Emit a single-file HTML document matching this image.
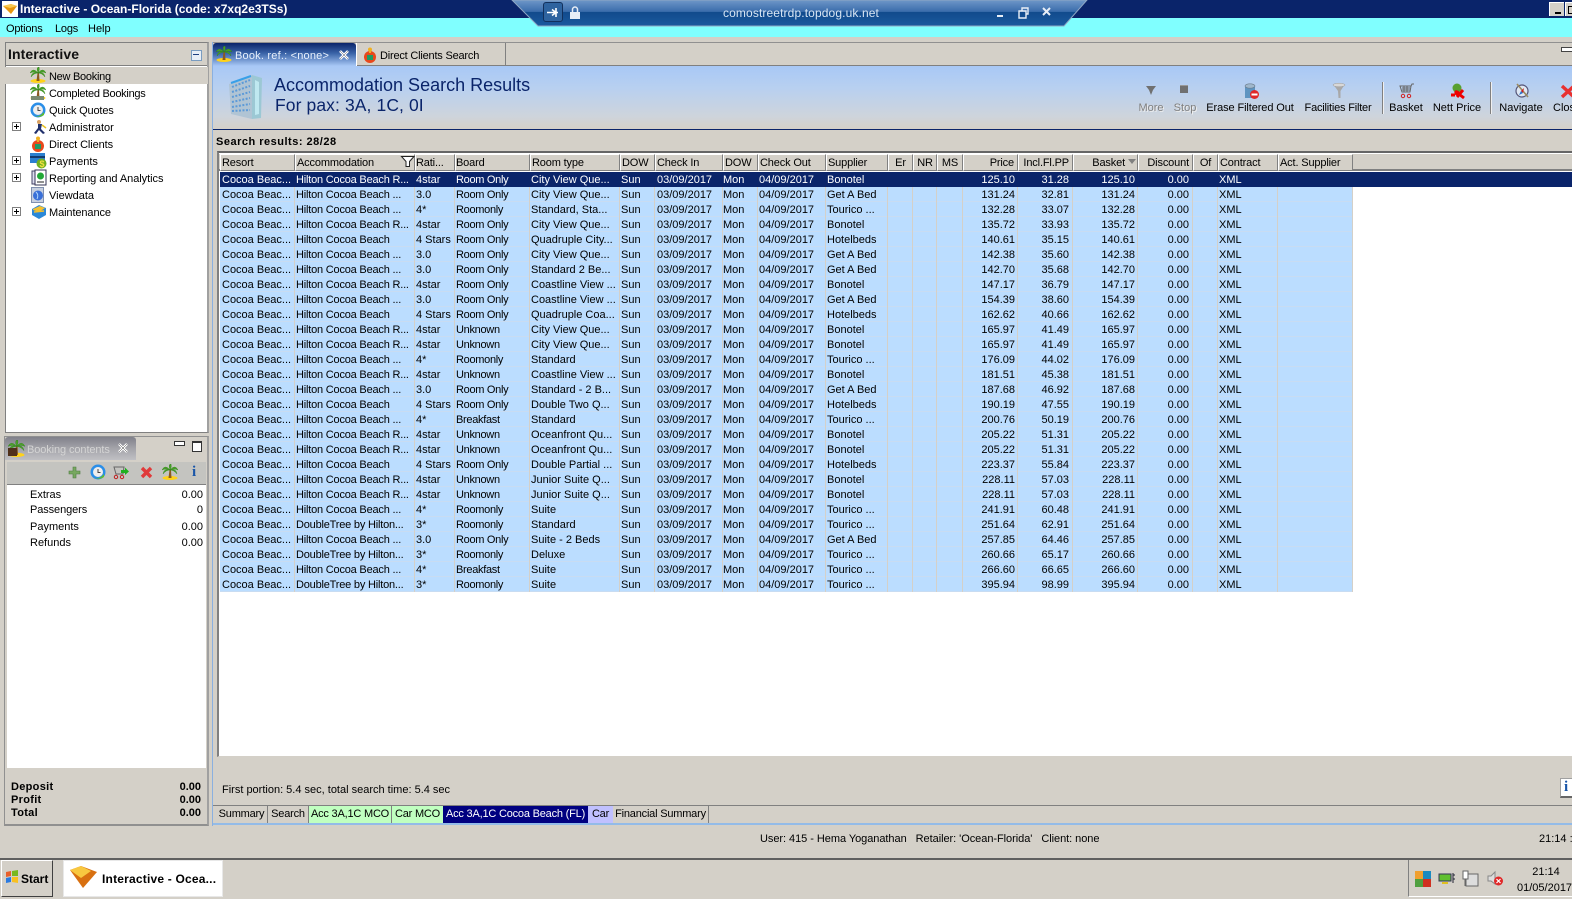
<!DOCTYPE html>
<html><head><meta charset="utf-8"><style>
html,body{margin:0;padding:0}
body{width:1572px;height:899px;overflow:hidden;background:#d4d0c8;position:relative;font:11px "Liberation Sans",sans-serif;color:#000}
.a{position:absolute;white-space:nowrap}
svg{position:absolute;overflow:visible}
table{border-collapse:separate;border-spacing:0;table-layout:fixed;position:absolute;font:11px/14px "Liberation Sans",sans-serif}
#g{left:220px;top:172px;width:1133px;background:#bbddff}
#g td{height:15px;line-height:14px;padding:1px 0 0 1px;border-right:1px solid #d4d0c8;box-shadow:inset 0 -1px 0 #c8dcf2;overflow:hidden;white-space:nowrap;box-sizing:border-box;vertical-align:top}
#g td:first-child{padding-left:2px}
#g td:nth-child(2),#g td:nth-child(10){padding-left:1px}
#g td:nth-child(7){padding-left:2px}
#g td:nth-child(8){padding-left:0}
#g td:nth-child(2){letter-spacing:-.2px}
#g td:nth-child(4){letter-spacing:-.3px}
#g td:nth-child(n+14):nth-child(-n+17){text-align:right}
#g td:nth-child(14){padding-right:2px}
#g td:nth-child(15){padding-right:3px}
#g td:nth-child(16){padding-right:2px}
#g td:nth-child(17){padding-right:3px}
#g tr:first-child td{background:#0a246a;color:#fff;border-color:#0a246a;box-shadow:none}
#h{left:220px;top:154px;width:1133px;letter-spacing:-.15px}
#h td{height:17px;padding:1px 0 0 1px;background:#d4d0c8;border-top:1px solid #fff;border-left:1px solid #fff;border-right:1px solid #808080;border-bottom:1px solid #808080;box-sizing:border-box;white-space:nowrap;overflow:hidden}
#h td:nth-child(3),#h td:nth-child(4){padding-left:0}
.r{text-align:right;padding-right:3px!important}.c{text-align:center;padding-left:0!important}
.t{left:49px}
.tab{position:absolute;top:806px;height:17px;line-height:16px;border-right:1px solid #808080;text-align:center;white-space:nowrap;letter-spacing:-.2px;box-sizing:border-box}
.tb{top:101px;color:#000;transform:translateX(-50%)}
</style></head><body>
<svg width="0" height="0" style="left:0;top:0"><defs>
<symbol id="palm" viewBox="0 0 16 16"><ellipse cx="8" cy="14" rx="7.500" ry="2" fill="#ffd21a"/><path d="M9 6L9.500 14H6.500L7.500 6Z" fill="#8a5a20"/><path d="M8 6Q3 0 0 6Q4 4 8 6ZM8 6Q13 0 16 6Q12 4 8 6ZM8 6Q2 4 1 10Q4 6 8 6ZM8 6Q14 4 15 10Q12 6 8 6ZM8 6Q6 0 9 0Q10 3 8 6Z" fill="#4aa02a" stroke="#2f8418" stroke-width=".4"/></symbol>
<symbol id="clock" viewBox="0 0 16 16"><circle cx="8" cy="8" r="7.500" fill="#2a8ee8"/><circle cx="8" cy="8" r="5" fill="#eee"/><path d="M8 5V8.500H10.500" stroke="#444" fill="none"/><path d="M3 12Q8 17 14 10L14 13Q8 17 3 12Z" fill="#5ebc30"/></symbol>
<symbol id="gift" viewBox="0 0 16 16"><circle cx="8" cy="10" r="6" fill="#e8481c"/><path d="M5 8H11V13H5Z" fill="#1f9c64"/><circle cx="8" cy="2.500" r="2" fill="#f0b020"/><path d="M8 4V6" stroke="#f0b020" stroke-width="2"/></symbol>
<symbol id="plus" viewBox="0 0 9 9"><rect x=".5" y=".5" width="8" height="8" fill="#fff" stroke="#808080"/><path d="M2 4.500H7M4.500 2V7" stroke="#000"/></symbol>
</defs></svg>

<!-- title bar -->
<div class="a" style="left:0;top:0;width:1572px;height:18px;background:#0a246a"></div>
<div class="a" style="left:2px;top:1px;width:16px;height:16px;background:#fff"></div>
<svg style="left:3px;top:3px" width="15" height="12"><path d="M0 3L8 1L14 3L8 11Z" fill="#e8960f"/><path d="M0 3L8 1L14 3L7 5Z" fill="#f8c850"/></svg>
<div class="a" style="left:20px;top:0;line-height:18px;color:#fff;font-weight:bold;font-size:12px">Interactive - Ocean-Florida (code: x7xq2e3TSs)</div>
<div class="a" style="left:1549px;top:2px;width:15px;height:14px;background:#d4d0c8;border-top:1px solid #fff;border-left:1px solid #fff;box-sizing:border-box"><div class="a" style="left:5px;top:9px;width:6px;height:2px;background:#000"></div></div>
<div class="a" style="left:1565px;top:2px;width:7px;height:14px;background:#d4d0c8;border-top:1px solid #fff;border-left:1px solid #fff;box-sizing:border-box"><div class="a" style="left:2px;top:3px;width:7px;height:6px;border:1px solid #000"></div></div>
<!-- menu -->
<div class="a" style="left:0;top:18px;width:1572px;height:19px;background:#80ffff"></div>
<div class="a" style="left:6px;top:22px;line-height:15px;letter-spacing:-.2px">Options</div>
<div class="a" style="left:55px;top:22px;line-height:15px;letter-spacing:-.2px">Logs</div>
<div class="a" style="left:88px;top:22px;line-height:15px">Help</div>
<!-- RDP bar -->
<svg style="left:512px;top:0" width="575" height="27"><defs><linearGradient id="rd" x1="0" y1="0" x2="0" y2="1"><stop offset="0" stop-color="#6f97c8"/><stop offset=".45" stop-color="#3a6cab"/><stop offset=".46" stop-color="#114a8c"/><stop offset="1" stop-color="#1b5a9e"/></linearGradient></defs><path d="M0 0H575L552 26H26Z" fill="url(#rd)" stroke="#8fa8c4"/></svg>
<div class="a" style="left:543px;top:2px;width:20px;height:20px;background:#2e639f;border:1px solid #12305c;border-radius:3px;box-sizing:border-box"></div>
<svg style="left:547px;top:7px" width="12" height="11"><path d="M0 5.500H11M9 1V10M9 5.500L5 2.500M9 5.500L5 8.500" stroke="#fff" stroke-width="1.600" fill="none"/></svg>
<svg style="left:570px;top:6px" width="11" height="13"><rect x="0" y="6" width="10" height="7" fill="#e8eef6"/><path d="M2.500 6V3.500A2.500 2.500 0 0 1 7.500 3.500V6" stroke="#e8eef6" stroke-width="1.500" fill="none"/></svg>
<div class="a" style="left:723px;top:6px;color:#d8e6f4;font-size:12px;line-height:15px;letter-spacing:.12px">comostreetrdp.topdog.uk.net</div>
<svg style="left:997px;top:6px" width="55" height="14"><path d="M0 10H6" stroke="#e8eef6" stroke-width="2"/><path d="M22 5H29V12H22ZM25 5V2H31V8H29" stroke="#e8eef6" fill="none" stroke-width="1.400"/><path d="M46 2L53 9M53 2L46 9" stroke="#e8eef6" stroke-width="2"/></svg>

<!-- left panel -->
<div class="a" style="left:5px;top:42px;width:204px;height:391px;box-sizing:border-box;border:1px solid #808080;border-right:2px solid #a0a0a0;background:#fff"></div>
<div class="a" style="left:6px;top:43px;width:201px;height:22px;background:#d4d0c8;border-bottom:1px solid #808080"></div>
<div class="a" style="left:8px;top:45px;font-weight:bold;font-size:14px;line-height:19px;color:#111;letter-spacing:.1px">Interactive</div>
<div class="a" style="left:191px;top:50px;width:9px;height:9px;border:1px solid #7a9cc0;background:#e8eef6"></div>
<div class="a" style="left:193px;top:54px;width:6px;height:1px;background:#1f3f80"></div>
<div class="a" style="left:5px;top:67px;width:203px;height:17px;background:#d4d0c8"></div>
<svg style="left:30px;top:67px" width="16" height="16"><use href="#palm"/></svg>
<svg style="left:30px;top:84px" width="16" height="16"><use href="#palm"/></svg>
<div class="a" style="left:31px;top:96px;width:13px;height:4px;background:#7a8a70"></div>
<svg style="left:30px;top:102px" width="16" height="16"><use href="#clock"/></svg>
<svg style="left:33px;top:119px" width="14" height="16"><circle cx="6" cy="3" r="2" fill="#d8a060"/><path d="M5 5L9 5L8 10L12 14L10 15L6 11L3 15L1 14L5 9Z" fill="#20306c"/><path d="M9 6L13 9" stroke="#e8c020" stroke-width="1.500"/></svg>
<svg style="left:30px;top:136px" width="16" height="16"><use href="#gift"/></svg>
<svg style="left:30px;top:153px" width="17" height="16"><rect x="0" y="0" width="15" height="10" fill="#2a7fd0"/><rect x="0" y="3" width="15" height="2" fill="#123a70"/><circle cx="11.500" cy="10.500" r="5" fill="#70b020"/><text x="9.500" y="14" font-size="9" font-family="Liberation Sans" fill="#f4e040" font-weight="bold">$</text></svg>
<svg style="left:32px;top:170px" width="15" height="16"><rect x="0" y="1" width="9" height="13" fill="#dde" stroke="#446"/><rect x="3" y="0" width="11" height="15" fill="#fff" stroke="#335"/><circle cx="8.500" cy="6" r="3.500" fill="#22a838"/><path d="M5 12H12" stroke="#222"/></svg>
<svg style="left:31px;top:187px" width="14" height="16"><rect x=".5" y=".5" width="12" height="15" fill="#c8d0e0" stroke="#8090b0"/><circle cx="7" cy="8.500" r="5" fill="#3a70d8"/><path d="M5 5Q8 8 6 12" stroke="#b0d8ff" fill="none"/></svg>
<svg style="left:31px;top:204px" width="16" height="16"><path d="M1 5L8 1L15 4L15 11L8 15L1 11Z" fill="#2a88d8"/><path d="M2 5L9 2L14 4L8 8L2 6Z" fill="#f4c030"/><path d="M3 8L13 7" stroke="#f4c030" stroke-width="1.500"/></svg>
<svg style="left:12px;top:122px" width="9" height="9"><use href="#plus"/></svg>
<svg style="left:12px;top:156px" width="9" height="9"><use href="#plus"/></svg>
<svg style="left:12px;top:173px" width="9" height="9"><use href="#plus"/></svg>
<svg style="left:12px;top:207px" width="9" height="9"><use href="#plus"/></svg>
<div class="a t" style="top:70px;line-height:15px;letter-spacing:-.27px">New Booking</div>
<div class="a t" style="top:87px;line-height:15px;letter-spacing:-.28px">Completed Bookings</div>
<div class="a t" style="top:104px;line-height:15px;letter-spacing:-.17px">Quick Quotes</div>
<div class="a t" style="top:121px;line-height:15px">Administrator</div>
<div class="a t" style="top:138px;line-height:15px;letter-spacing:-.1px">Direct Clients</div>
<div class="a t" style="top:155px;line-height:15px">Payments</div>
<div class="a t" style="top:172px;line-height:15px;letter-spacing:-.05px">Reporting and Analytics</div>
<div class="a t" style="top:189px;line-height:15px">Viewdata</div>
<div class="a t" style="top:206px;line-height:15px;letter-spacing:-.1px">Maintenance</div>

<!-- booking contents -->
<div class="a" style="left:4px;top:436px;width:205px;height:390px;box-sizing:border-box;border:1px solid #909090;border-right:2px solid #a0a0a0;border-bottom:2px solid #909090;background:#d4d0c8"></div>
<div class="a" style="left:5px;top:437px;width:131px;height:23px;background:linear-gradient(#80808a,#a4a4aa 50%,#c0c0c4);border-radius:3px 3px 0 0"></div>
<svg style="left:8px;top:440px" width="17" height="17"><use href="#palm"/><rect x="0" y="8" width="9" height="8" fill="#50301a"/></svg>
<div class="a" style="left:27px;top:443px;line-height:15px;color:#d4d4d4;letter-spacing:-.1px">Booking contents</div>
<svg style="left:118px;top:443px" width="10" height="10"><path d="M1 1L9 9M9 1L1 9" stroke="#fff" stroke-width="2.400"/><path d="M1 1L9 9M9 1L1 9" stroke="#333" stroke-width=".5"/></svg>
<div class="a" style="left:174px;top:441px;width:9px;height:3px;border:1px solid #333;background:#fff"></div>
<div class="a" style="left:192px;top:441px;width:8px;height:8px;border:1px solid #333;border-top-width:2px;background:#fff"></div>
<div class="a" style="left:7px;top:462px;width:199px;height:23px;background:#c4c4c0;border-bottom:1px solid #808080;box-sizing:border-box"></div>
<svg style="left:68px;top:466px" width="13" height="13"><path d="M5 1H8V5H12V8H8V12H5V8H1V5H5Z" fill="#78a860" stroke="#4c7c40" stroke-width=".6"/></svg>
<svg style="left:90px;top:464px" width="16" height="16"><use href="#clock"/></svg>
<svg style="left:113px;top:465px" width="17" height="15"><path d="M1 2H11L10 9H3Z" fill="none" stroke="#666"/><circle cx="3" cy="12" r="1.700" fill="none" stroke="#c02020"/><circle cx="9" cy="12" r="1.700" fill="none" stroke="#c02020"/><path d="M8 5H12V2.500L16 6.500L12 10V8H8Z" fill="#20b020"/></svg>
<svg style="left:140px;top:466px" width="13" height="13"><path d="M2 2L11 11M11 2L2 11" stroke="#e03a3a" stroke-width="3.400"/></svg>
<svg style="left:162px;top:464px" width="16" height="16"><use href="#palm"/></svg>
<div class="a" style="left:192px;top:464px;color:#1a56a8;font:bold 15px/16px 'Liberation Serif',serif">i</div>
<div class="a" style="left:7px;top:485px;width:199px;height:283px;background:#fff"></div>
<div class="a" style="left:30px;top:488px;line-height:15px">Extras</div>
<div class="a" style="left:30px;top:503px;line-height:15px;letter-spacing:-.1px">Passengers</div>
<div class="a" style="left:30px;top:520px;line-height:15px">Payments</div>
<div class="a" style="left:30px;top:536px;line-height:15px">Refunds</div>
<div class="a" style="right:1369px;top:488px;line-height:15px">0.00</div>
<div class="a" style="right:1369px;top:503px;line-height:15px">0</div>
<div class="a" style="right:1369px;top:520px;line-height:15px">0.00</div>
<div class="a" style="right:1369px;top:536px;line-height:15px">0.00</div>
<div class="a" style="left:11px;top:781px;font-weight:bold;line-height:13px;letter-spacing:.3px">Deposit<br>Profit<br>Total</div>
<div class="a" style="right:1371px;top:781px;font-weight:bold;line-height:13px;text-align:right">0.00<br>0.00<br>0.00</div>

<!-- right panel -->
<div class="a" style="left:212px;top:42px;width:1360px;height:1px;background:#909090"></div>
<div class="a" style="left:212px;top:42px;width:1px;height:784px;background:#8ab0e0"></div>
<div class="a" style="left:213px;top:65px;width:1359px;height:1px;background:#808080"></div>
<div class="a" style="left:213px;top:66px;width:1359px;height:63px;background:linear-gradient(#a8c8f6,#b8d0f0 35%,#ced4dc 80%,#d4d0c8)"></div>
<div class="a" style="left:213px;top:43px;width:143px;height:23px;background:linear-gradient(#0a246a,#3a64a8 45%,#a8c8f6);border-radius:3px 3px 0 0"></div>
<div class="a" style="left:505px;top:43px;width:1px;height:22px;background:#808080"></div>
<div class="a" style="left:356px;top:43px;width:1px;height:23px;background:#fff"></div>
<svg style="left:216px;top:46px" width="16" height="16"><use href="#palm"/></svg>
<div class="a" style="left:235px;top:49px;line-height:15px;color:#e8f0fc;letter-spacing:.2px">Book. ref.: &lt;none&gt;</div>
<svg style="left:339px;top:50px" width="10" height="10"><path d="M1 1L9 9M9 1L1 9" stroke="#fff" stroke-width="2.600"/><path d="M1 1L9 9M9 1L1 9" stroke="#223" stroke-width=".4"/></svg>
<svg style="left:362px;top:47px" width="16" height="16"><use href="#gift"/></svg>
<div class="a" style="left:380px;top:49px;line-height:15px;letter-spacing:-.2px">Direct Clients Search</div>
<div class="a" style="left:1561px;top:47px;width:10px;height:3px;border:1px solid #444;background:#fff"></div>
<!-- building -->
<svg style="left:228px;top:74px" width="36" height="46"><path d="M1 10L24 1L24 45L3 40Z" fill="#b0c4d4"/><path d="M24 1L34 4L33 44L24 45Z" fill="#9cc8d4"/><path d="M27 6L31 8L31 40L27 41Z" fill="#bfe8f0"/><path d="M4 13L22 6M4 18L22 12M4 23L22 18M4 28L22 24M4 33L22 30M4 37L22 36" stroke="#5c9ad8" stroke-width="2" stroke-dasharray="2 1.500"/><path d="M3 9L23 2" stroke="#38a0e8" stroke-width="2"/></svg>
<div class="a" style="left:274px;top:75px;font-size:18px;line-height:21px;color:#0a246a;letter-spacing:0">Accommodation Search Results</div>
<div class="a" style="left:275px;top:95px;font-size:17.500px;line-height:21px;color:#0a246a;letter-spacing:.1px">For pax: 3A, 1C, 0I</div>
<div class="a" style="left:213px;top:129px;width:1359px;height:1px;background:#0a246a"></div>
<!-- toolbar -->
<svg style="left:1145px;top:85px" width="12" height="11"><path d="M1 1H11L8 5L6 10L4 5Z" fill="#707070"/></svg>
<div class="a" style="left:1180px;top:85px;width:8px;height:8px;background:#707070;border-top:1px solid #999;box-sizing:border-box"></div>
<svg style="left:1244px;top:83px" width="16" height="17"><path d="M1 3V15H11V3Z" fill="#5f94c0"/><ellipse cx="6" cy="3" rx="5" ry="2.200" fill="#a0b8cc" stroke="#6a7a8a" stroke-width=".6"/><circle cx="10.500" cy="11.500" r="4.500" fill="#e02828"/><rect x="7.500" y="10.500" width="6" height="2" fill="#fff"/></svg>
<svg style="left:1333px;top:83px" width="13" height="16"><path d="M0 1H12L7.500 8V15H5.500L5 8Z" fill="#a8a8a8"/><ellipse cx="6" cy="2" rx="6" ry="1.800" fill="#d8d8d8" stroke="#999" stroke-width=".5"/></svg>
<div class="a" style="left:1382px;top:82px;width:1px;height:32px;background:#808080"></div>
<div class="a" style="left:1383px;top:82px;width:1px;height:32px;background:#f0f0f0"></div>
<svg style="left:1399px;top:83px" width="16" height="16"><path d="M1 3H12L11 9H3ZM12 3L13 1H15M3 5H11M3 7H11M5 3V9M8 3V9" stroke="#666" fill="none"/><circle cx="4" cy="13" r="1.700" fill="none" stroke="#d02020"/><circle cx="10" cy="13" r="1.700" fill="none" stroke="#d02020"/></svg>
<svg style="left:1450px;top:83px" width="16" height="16"><circle cx="7" cy="5" r="4.500" fill="#58a030"/><path d="M1 12H5M5 8L14 15M13 7L7 14" stroke="#e00" stroke-width="3"/><circle cx="7" cy="10" r="2.500" fill="#e00"/></svg>
<div class="a" style="left:1490px;top:82px;width:1px;height:32px;background:#808080"></div>
<div class="a" style="left:1491px;top:82px;width:1px;height:32px;background:#f0f0f0"></div>
<svg style="left:1514px;top:83px" width="16" height="16"><circle cx="8" cy="8" r="6" fill="#dfe8f4" stroke="#557" stroke-width="1.200"/><path d="M3 1L14 14" stroke="#9a8a60" stroke-width="1.600"/><path d="M10 5L7 8L9 10Z" fill="#d02020"/><path d="M7 8L5 12L9 10Z" fill="#2a70c8"/></svg>
<svg style="left:1560px;top:84px" width="12" height="14"><path d="M2 2L14 13M14 2L2 13" stroke="#e83030" stroke-width="3.400"/></svg>
<div class="a tb" style="left:1151px;color:#808080;text-shadow:1px 1px 0 #eee;line-height:15px">More</div>
<div class="a tb" style="left:1185px;color:#808080;text-shadow:1px 1px 0 #eee;line-height:15px">Stop</div>
<div class="a tb" style="left:1250px;line-height:15px;letter-spacing:-.1px">Erase Filtered Out</div>
<div class="a tb" style="left:1338px;line-height:15px;letter-spacing:-.2px">Facilities Filter</div>
<div class="a tb" style="left:1406px;line-height:15px">Basket</div>
<div class="a tb" style="left:1457px;line-height:15px">Nett Price</div>
<div class="a tb" style="left:1521px;line-height:15px">Navigate</div>
<div class="a" style="left:1553px;top:101px;line-height:15px">Close</div>
<div class="a" style="left:216px;top:135px;font-weight:bold;line-height:15px;letter-spacing:.5px">Search results: 28/28</div>
<!-- grid -->
<div class="a" style="left:217px;top:151px;width:1355px;height:606px;background:#fff;border-top:2px solid #666;border-left:2px solid #808080;border-bottom:1px solid #d4d0c8;box-sizing:border-box"></div>
<div class="a" style="left:219px;top:154px;width:1353px;height:17px;background:#d4d0c8;border-bottom:2px solid #808080;box-sizing:border-box"></div>
<div class="a" style="left:1353px;top:172px;width:219px;height:15px;background:#0a246a"></div>
<table id="h"><colgroup><col width="75"><col width="120"><col width="40"><col width="75"><col width="90"><col width="35"><col width="68"><col width="35"><col width="68"><col width="62"><col width="25"><col width="24"><col width="26"><col width="55"><col width="55"><col width="65"><col width="55"><col width="25"><col width="60"><col width="75"></colgroup><tr><td>Resort</td><td>Accommodation</td><td>Rati...</td><td>Board</td><td>Room type</td><td>DOW</td><td>Check In</td><td>DOW</td><td>Check Out</td><td>Supplier</td><td class="c">Er</td><td class="c">NR</td><td class="c">MS</td><td class="r">Price</td><td class="r">Incl.Fl.PP</td><td class="r" style="padding-right:12px!important">Basket</td><td class="r">Discount</td><td class="c">Of</td><td>Contract</td><td>Act. Supplier</td></tr></table>
<svg style="left:401px;top:156px" width="14" height="12"><path d="M.5 .5H13L8.500 5.500V10.500L5 10.500V5.500Z" fill="#fff" stroke="#222"/></svg>
<svg style="left:1128px;top:159px" width="9" height="6"><path d="M0 0H8L4 5Z" fill="#808080"/></svg>
<table id="g"><colgroup><col width="75"><col width="120"><col width="40"><col width="75"><col width="90"><col width="35"><col width="68"><col width="35"><col width="68"><col width="62"><col width="25"><col width="24"><col width="26"><col width="55"><col width="55"><col width="65"><col width="55"><col width="25"><col width="60"><col width="75"></colgroup>
<tr><td>Cocoa Beac...</td><td>Hilton Cocoa Beach R...</td><td>4star</td><td>Room Only</td><td>City View Que...</td><td>Sun</td><td>03/09/2017</td><td>Mon</td><td>04/09/2017</td><td>Bonotel</td><td></td><td></td><td></td><td>125.10</td><td>31.28</td><td>125.10</td><td>0.00</td><td></td><td>XML</td><td></td></tr>
<tr><td>Cocoa Beac...</td><td>Hilton Cocoa Beach ...</td><td>3.0</td><td>Room Only</td><td>City View Que...</td><td>Sun</td><td>03/09/2017</td><td>Mon</td><td>04/09/2017</td><td>Get A Bed</td><td></td><td></td><td></td><td>131.24</td><td>32.81</td><td>131.24</td><td>0.00</td><td></td><td>XML</td><td></td></tr>
<tr><td>Cocoa Beac...</td><td>Hilton Cocoa Beach ...</td><td>4*</td><td>Roomonly</td><td>Standard, Sta...</td><td>Sun</td><td>03/09/2017</td><td>Mon</td><td>04/09/2017</td><td>Tourico ...</td><td></td><td></td><td></td><td>132.28</td><td>33.07</td><td>132.28</td><td>0.00</td><td></td><td>XML</td><td></td></tr>
<tr><td>Cocoa Beac...</td><td>Hilton Cocoa Beach R...</td><td>4star</td><td>Room Only</td><td>City View Que...</td><td>Sun</td><td>03/09/2017</td><td>Mon</td><td>04/09/2017</td><td>Bonotel</td><td></td><td></td><td></td><td>135.72</td><td>33.93</td><td>135.72</td><td>0.00</td><td></td><td>XML</td><td></td></tr>
<tr><td>Cocoa Beac...</td><td>Hilton Cocoa Beach</td><td>4 Stars</td><td>Room Only</td><td>Quadruple City...</td><td>Sun</td><td>03/09/2017</td><td>Mon</td><td>04/09/2017</td><td>Hotelbeds</td><td></td><td></td><td></td><td>140.61</td><td>35.15</td><td>140.61</td><td>0.00</td><td></td><td>XML</td><td></td></tr>
<tr><td>Cocoa Beac...</td><td>Hilton Cocoa Beach ...</td><td>3.0</td><td>Room Only</td><td>City View Que...</td><td>Sun</td><td>03/09/2017</td><td>Mon</td><td>04/09/2017</td><td>Get A Bed</td><td></td><td></td><td></td><td>142.38</td><td>35.60</td><td>142.38</td><td>0.00</td><td></td><td>XML</td><td></td></tr>
<tr><td>Cocoa Beac...</td><td>Hilton Cocoa Beach ...</td><td>3.0</td><td>Room Only</td><td>Standard 2 Be...</td><td>Sun</td><td>03/09/2017</td><td>Mon</td><td>04/09/2017</td><td>Get A Bed</td><td></td><td></td><td></td><td>142.70</td><td>35.68</td><td>142.70</td><td>0.00</td><td></td><td>XML</td><td></td></tr>
<tr><td>Cocoa Beac...</td><td>Hilton Cocoa Beach R...</td><td>4star</td><td>Room Only</td><td>Coastline View ...</td><td>Sun</td><td>03/09/2017</td><td>Mon</td><td>04/09/2017</td><td>Bonotel</td><td></td><td></td><td></td><td>147.17</td><td>36.79</td><td>147.17</td><td>0.00</td><td></td><td>XML</td><td></td></tr>
<tr><td>Cocoa Beac...</td><td>Hilton Cocoa Beach ...</td><td>3.0</td><td>Room Only</td><td>Coastline View ...</td><td>Sun</td><td>03/09/2017</td><td>Mon</td><td>04/09/2017</td><td>Get A Bed</td><td></td><td></td><td></td><td>154.39</td><td>38.60</td><td>154.39</td><td>0.00</td><td></td><td>XML</td><td></td></tr>
<tr><td>Cocoa Beac...</td><td>Hilton Cocoa Beach</td><td>4 Stars</td><td>Room Only</td><td>Quadruple Coa...</td><td>Sun</td><td>03/09/2017</td><td>Mon</td><td>04/09/2017</td><td>Hotelbeds</td><td></td><td></td><td></td><td>162.62</td><td>40.66</td><td>162.62</td><td>0.00</td><td></td><td>XML</td><td></td></tr>
<tr><td>Cocoa Beac...</td><td>Hilton Cocoa Beach R...</td><td>4star</td><td>Unknown</td><td>City View Que...</td><td>Sun</td><td>03/09/2017</td><td>Mon</td><td>04/09/2017</td><td>Bonotel</td><td></td><td></td><td></td><td>165.97</td><td>41.49</td><td>165.97</td><td>0.00</td><td></td><td>XML</td><td></td></tr>
<tr><td>Cocoa Beac...</td><td>Hilton Cocoa Beach R...</td><td>4star</td><td>Unknown</td><td>City View Que...</td><td>Sun</td><td>03/09/2017</td><td>Mon</td><td>04/09/2017</td><td>Bonotel</td><td></td><td></td><td></td><td>165.97</td><td>41.49</td><td>165.97</td><td>0.00</td><td></td><td>XML</td><td></td></tr>
<tr><td>Cocoa Beac...</td><td>Hilton Cocoa Beach ...</td><td>4*</td><td>Roomonly</td><td>Standard</td><td>Sun</td><td>03/09/2017</td><td>Mon</td><td>04/09/2017</td><td>Tourico ...</td><td></td><td></td><td></td><td>176.09</td><td>44.02</td><td>176.09</td><td>0.00</td><td></td><td>XML</td><td></td></tr>
<tr><td>Cocoa Beac...</td><td>Hilton Cocoa Beach R...</td><td>4star</td><td>Unknown</td><td>Coastline View ...</td><td>Sun</td><td>03/09/2017</td><td>Mon</td><td>04/09/2017</td><td>Bonotel</td><td></td><td></td><td></td><td>181.51</td><td>45.38</td><td>181.51</td><td>0.00</td><td></td><td>XML</td><td></td></tr>
<tr><td>Cocoa Beac...</td><td>Hilton Cocoa Beach ...</td><td>3.0</td><td>Room Only</td><td>Standard - 2 B...</td><td>Sun</td><td>03/09/2017</td><td>Mon</td><td>04/09/2017</td><td>Get A Bed</td><td></td><td></td><td></td><td>187.68</td><td>46.92</td><td>187.68</td><td>0.00</td><td></td><td>XML</td><td></td></tr>
<tr><td>Cocoa Beac...</td><td>Hilton Cocoa Beach</td><td>4 Stars</td><td>Room Only</td><td>Double Two Q...</td><td>Sun</td><td>03/09/2017</td><td>Mon</td><td>04/09/2017</td><td>Hotelbeds</td><td></td><td></td><td></td><td>190.19</td><td>47.55</td><td>190.19</td><td>0.00</td><td></td><td>XML</td><td></td></tr>
<tr><td>Cocoa Beac...</td><td>Hilton Cocoa Beach ...</td><td>4*</td><td>Breakfast</td><td>Standard</td><td>Sun</td><td>03/09/2017</td><td>Mon</td><td>04/09/2017</td><td>Tourico ...</td><td></td><td></td><td></td><td>200.76</td><td>50.19</td><td>200.76</td><td>0.00</td><td></td><td>XML</td><td></td></tr>
<tr><td>Cocoa Beac...</td><td>Hilton Cocoa Beach R...</td><td>4star</td><td>Unknown</td><td>Oceanfront Qu...</td><td>Sun</td><td>03/09/2017</td><td>Mon</td><td>04/09/2017</td><td>Bonotel</td><td></td><td></td><td></td><td>205.22</td><td>51.31</td><td>205.22</td><td>0.00</td><td></td><td>XML</td><td></td></tr>
<tr><td>Cocoa Beac...</td><td>Hilton Cocoa Beach R...</td><td>4star</td><td>Unknown</td><td>Oceanfront Qu...</td><td>Sun</td><td>03/09/2017</td><td>Mon</td><td>04/09/2017</td><td>Bonotel</td><td></td><td></td><td></td><td>205.22</td><td>51.31</td><td>205.22</td><td>0.00</td><td></td><td>XML</td><td></td></tr>
<tr><td>Cocoa Beac...</td><td>Hilton Cocoa Beach</td><td>4 Stars</td><td>Room Only</td><td>Double Partial ...</td><td>Sun</td><td>03/09/2017</td><td>Mon</td><td>04/09/2017</td><td>Hotelbeds</td><td></td><td></td><td></td><td>223.37</td><td>55.84</td><td>223.37</td><td>0.00</td><td></td><td>XML</td><td></td></tr>
<tr><td>Cocoa Beac...</td><td>Hilton Cocoa Beach R...</td><td>4star</td><td>Unknown</td><td>Junior Suite Q...</td><td>Sun</td><td>03/09/2017</td><td>Mon</td><td>04/09/2017</td><td>Bonotel</td><td></td><td></td><td></td><td>228.11</td><td>57.03</td><td>228.11</td><td>0.00</td><td></td><td>XML</td><td></td></tr>
<tr><td>Cocoa Beac...</td><td>Hilton Cocoa Beach R...</td><td>4star</td><td>Unknown</td><td>Junior Suite Q...</td><td>Sun</td><td>03/09/2017</td><td>Mon</td><td>04/09/2017</td><td>Bonotel</td><td></td><td></td><td></td><td>228.11</td><td>57.03</td><td>228.11</td><td>0.00</td><td></td><td>XML</td><td></td></tr>
<tr><td>Cocoa Beac...</td><td>Hilton Cocoa Beach ...</td><td>4*</td><td>Roomonly</td><td>Suite</td><td>Sun</td><td>03/09/2017</td><td>Mon</td><td>04/09/2017</td><td>Tourico ...</td><td></td><td></td><td></td><td>241.91</td><td>60.48</td><td>241.91</td><td>0.00</td><td></td><td>XML</td><td></td></tr>
<tr><td>Cocoa Beac...</td><td>DoubleTree by Hilton...</td><td>3*</td><td>Roomonly</td><td>Standard</td><td>Sun</td><td>03/09/2017</td><td>Mon</td><td>04/09/2017</td><td>Tourico ...</td><td></td><td></td><td></td><td>251.64</td><td>62.91</td><td>251.64</td><td>0.00</td><td></td><td>XML</td><td></td></tr>
<tr><td>Cocoa Beac...</td><td>Hilton Cocoa Beach ...</td><td>3.0</td><td>Room Only</td><td>Suite - 2 Beds</td><td>Sun</td><td>03/09/2017</td><td>Mon</td><td>04/09/2017</td><td>Get A Bed</td><td></td><td></td><td></td><td>257.85</td><td>64.46</td><td>257.85</td><td>0.00</td><td></td><td>XML</td><td></td></tr>
<tr><td>Cocoa Beac...</td><td>DoubleTree by Hilton...</td><td>3*</td><td>Roomonly</td><td>Deluxe</td><td>Sun</td><td>03/09/2017</td><td>Mon</td><td>04/09/2017</td><td>Tourico ...</td><td></td><td></td><td></td><td>260.66</td><td>65.17</td><td>260.66</td><td>0.00</td><td></td><td>XML</td><td></td></tr>
<tr><td>Cocoa Beac...</td><td>Hilton Cocoa Beach ...</td><td>4*</td><td>Breakfast</td><td>Suite</td><td>Sun</td><td>03/09/2017</td><td>Mon</td><td>04/09/2017</td><td>Tourico ...</td><td></td><td></td><td></td><td>266.60</td><td>66.65</td><td>266.60</td><td>0.00</td><td></td><td>XML</td><td></td></tr>
<tr><td>Cocoa Beac...</td><td>DoubleTree by Hilton...</td><td>3*</td><td>Roomonly</td><td>Suite</td><td>Sun</td><td>03/09/2017</td><td>Mon</td><td>04/09/2017</td><td>Tourico ...</td><td></td><td></td><td></td><td>395.94</td><td>98.99</td><td>395.94</td><td>0.00</td><td></td><td>XML</td><td></td></tr>
</table>
<!-- bottom -->
<div class="a" style="left:222px;top:783px;line-height:15px">First portion: 5.4 sec, total search time: 5.4 sec</div>
<div class="a" style="left:1560px;top:778px;width:12px;height:20px;background:#fff;border:1px solid #a0a0a0;border-bottom:2px solid #666;border-right:0;box-sizing:border-box;color:#1a56a8;font:bold 15px/17px 'Liberation Serif',serif;padding-left:3px">i</div>
<div class="a" style="left:213px;top:805px;width:1359px;height:1px;background:#808080"></div>
<div class="a" style="left:213px;top:823px;width:1359px;height:2px;background:#93bbe8"></div>
<div class="tab" style="left:216px;width:52px">Summary</div>
<div class="tab" style="left:268px;width:41px">Search</div>
<div class="tab" style="left:309px;width:83px;background:#c0ffc0">Acc 3A,1C MCO</div>
<div class="tab" style="left:392px;width:51px;background:#c0ffc0;border-right:0">Car MCO</div>
<div class="tab" style="left:443px;width:145px;background:#000080;color:#fff;border:0">Acc 3A,1C Cocoa Beach (FL)</div>
<div class="tab" style="left:588px;width:25px;background:#c0c0ff;border-right:0">Car</div>
<div class="tab" style="left:613px;width:96px">Financial Summary</div>
<div class="a" style="left:760px;top:832px;line-height:15px;letter-spacing:-.05px">User: 415 - Hema Yoganathan&nbsp;&nbsp;&nbsp;Retailer: 'Ocean-Florida'&nbsp;&nbsp;&nbsp;Client: none</div>
<div class="a" style="left:1539px;top:832px;line-height:15px">21:14 :</div>
<!-- taskbar -->
<div class="a" style="left:0;top:858px;width:1572px;height:2px;background:#606060"></div>
<div class="a" style="left:1px;top:860px;width:52px;height:37px;background:#d4d0c8;border:1px solid;border-color:#fff #404040 #404040 #fff;box-sizing:border-box"></div>
<svg style="left:5px;top:870px" width="14" height="14"><path d="M1 2L6 1V6L1 7Z" fill="#e8602c"/><path d="M7 1L13 0V6L7 6Z" fill="#78b820"/><path d="M1 8L6 7V12L1 13Z" fill="#2a7ae0"/><path d="M7 7H13V13L7 12Z" fill="#f8c020"/></svg>
<div class="a" style="left:21px;top:871px;font-weight:bold;font-size:12px;line-height:16px">Start</div>
<div class="a" style="left:63px;top:860px;width:160px;height:37px;background:#fff;border:1px solid #e8e8e8;box-sizing:border-box"></div>
<svg style="left:69px;top:866px" width="29" height="23"><path d="M1 4L12 0L28 6L14 22Z" fill="#d87010"/><path d="M1 4L12 0L22 5L12 12Z" fill="#f8c840"/></svg>
<div class="a" style="left:102px;top:871px;font-weight:bold;font-size:12px;line-height:16px;letter-spacing:.2px">Interactive - Ocea...</div>
<div class="a" style="left:1408px;top:860px;width:164px;height:37px;border-left:1px solid #808080;border-bottom:1px solid #fff;box-sizing:border-box"></div>
<svg style="left:1415px;top:871px" width="16" height="16"><rect x="0" y="0" width="8" height="8" fill="#f0a030"/><rect x="8" y="0" width="8" height="8" fill="#1a8ac0"/><rect x="0" y="8" width="8" height="8" fill="#50a040"/><rect x="8" y="8" width="8" height="8" fill="#d03020"/></svg>
<svg style="left:1439px;top:873px" width="16" height="11"><rect x="0" y="1" width="12" height="7" fill="#60c030" stroke="#335"/><path d="M14 0V10M14 2H16M14 6H16" stroke="#223"/><path d="M3 10H9" stroke="#e0c020" stroke-width="2"/></svg>
<svg style="left:1463px;top:871px" width="16" height="16"><rect x="3" y="3" width="12" height="12" fill="#ddd" stroke="#666"/><rect x="0" y="0" width="5" height="8" fill="#fff" stroke="#666"/><path d="M2.500 8V15" stroke="#666" stroke-width="2"/></svg>
<svg style="left:1487px;top:871px" width="17" height="16"><path d="M1 5H4L8 1V13L4 10H1Z" fill="#ddd" stroke="#888"/><circle cx="11.500" cy="10" r="4.500" fill="#e02828"/><path d="M9.500 8L13.500 12M13.500 8L9.500 12" stroke="#fff" stroke-width="1.200"/></svg>
<div class="a" style="left:1531px;top:864px;line-height:16px;width:30px;text-align:center">21:14</div>
<div class="a" style="left:1517px;top:880px;line-height:16px">01/05/2017</div>
</body></html>
